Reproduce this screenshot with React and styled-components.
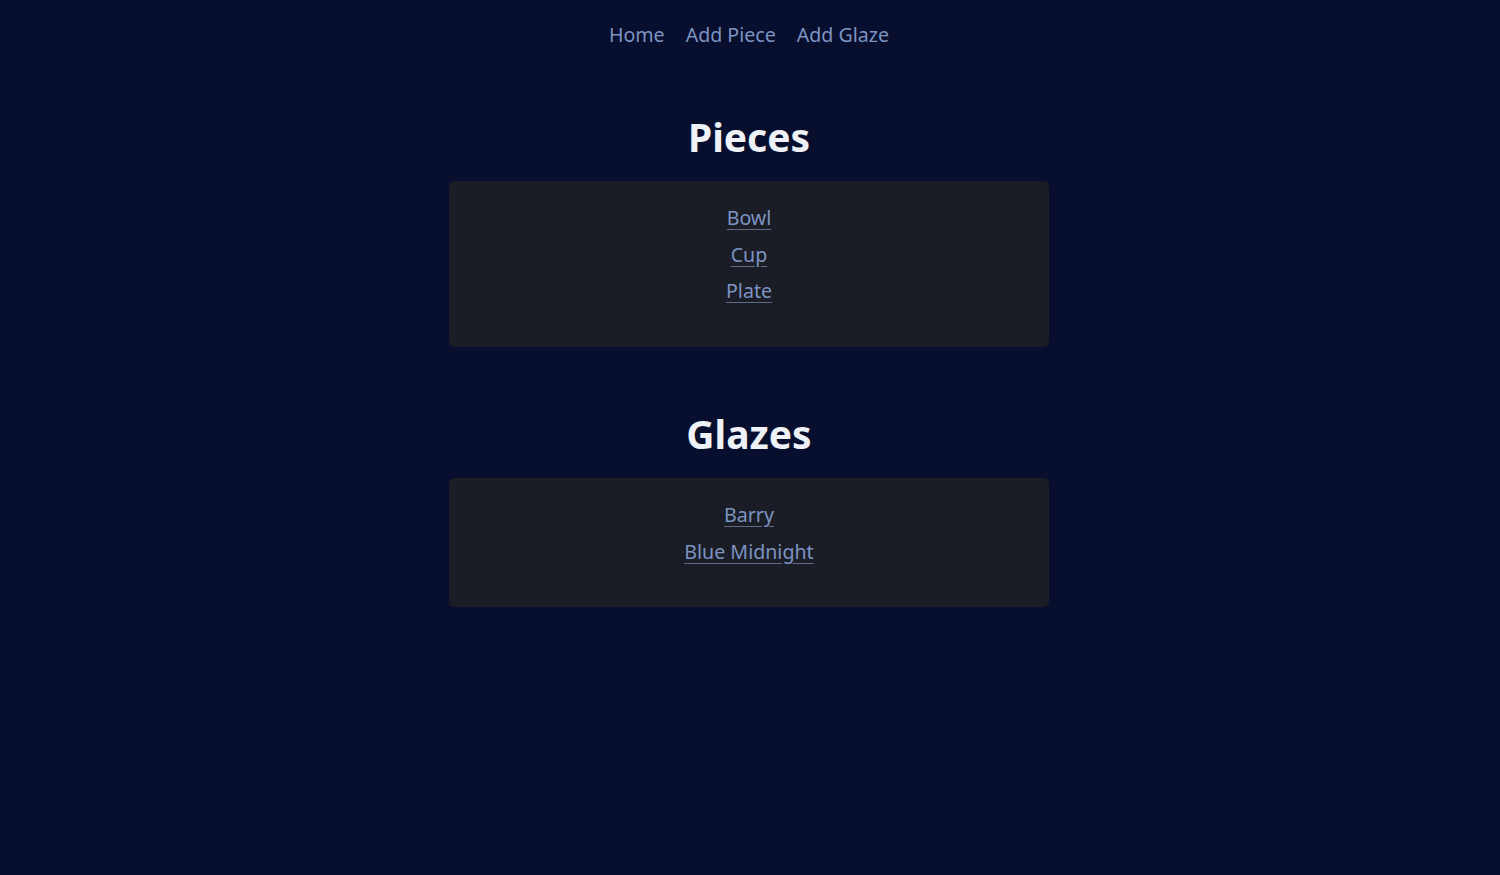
import React from "react";
import styled, { createGlobalStyle } from "styled-components";

const GlobalStyle = createGlobalStyle`
  html, body {
    margin: 0;
    padding: 0;
    background: #070e2e;
    font-family: "Segoe UI", "Noto Sans", "Open Sans", sans-serif;
  }
`;

const Page = styled.div`
  min-height: 875px;
  background: #070e2e;
  display: flex;
  flex-direction: column;
  align-items: center;
  padding: 20px 2px 0 0;
  box-sizing: border-box;
`;

const Nav = styled.nav`
  display: flex;
  gap: 21px;
  height: 30px;
  align-items: center;
  margin-bottom: 64px;
`;

const NavLink = styled.a`
  color: #7d93c2;
  font-size: 19.6px;
  text-decoration: none;
  line-height: 30px;
`;

const Section = styled.section`
  display: flex;
  flex-direction: column;
  align-items: center;
  margin-bottom: 64px;
`;

const Title = styled.h1`
  margin: 0 0 19px;
  height: 48px;
  line-height: 46px;
  font-size: 39px;
  font-weight: 700;
  color: #eef1f6;
`;

const Card = styled.div`
  width: 600px;
  box-sizing: border-box;
  background: #1a1d26;
  border-radius: 5px;
  padding: 19px 0 ${(p) => p.$bottom || 37.5}px;
  display: flex;
  flex-direction: column;
  align-items: center;
`;

const Item = styled.a`
  color: #7d93c2;
  font-size: 19.6px;
  height: 36.5px;
  line-height: 36.5px;
  text-decoration: underline;
  text-decoration-color: #5f6b86;
  text-underline-offset: 4px;
`;

const pieces = ["Bowl", "Cup", "Plate"];
const glazes = ["Barry", "Blue Midnight"];

export default function App() {
  return (
    <>
      <GlobalStyle />
      <Page>
        <Nav>
          <NavLink href="#">Home</NavLink>
          <NavLink href="#">Add Piece</NavLink>
          <NavLink href="#">Add Glaze</NavLink>
        </Nav>
        <Section>
          <Title>Pieces</Title>
          <Card>
            {pieces.map((p) => (
              <Item key={p} href="#">{p}</Item>
            ))}
          </Card>
        </Section>
        <Section>
          <Title>Glazes</Title>
          <Card $bottom={37}>
            {glazes.map((g) => (
              <Item key={g} href="#">{g}</Item>
            ))}
          </Card>
        </Section>
      </Page>
    </>
  );
}
